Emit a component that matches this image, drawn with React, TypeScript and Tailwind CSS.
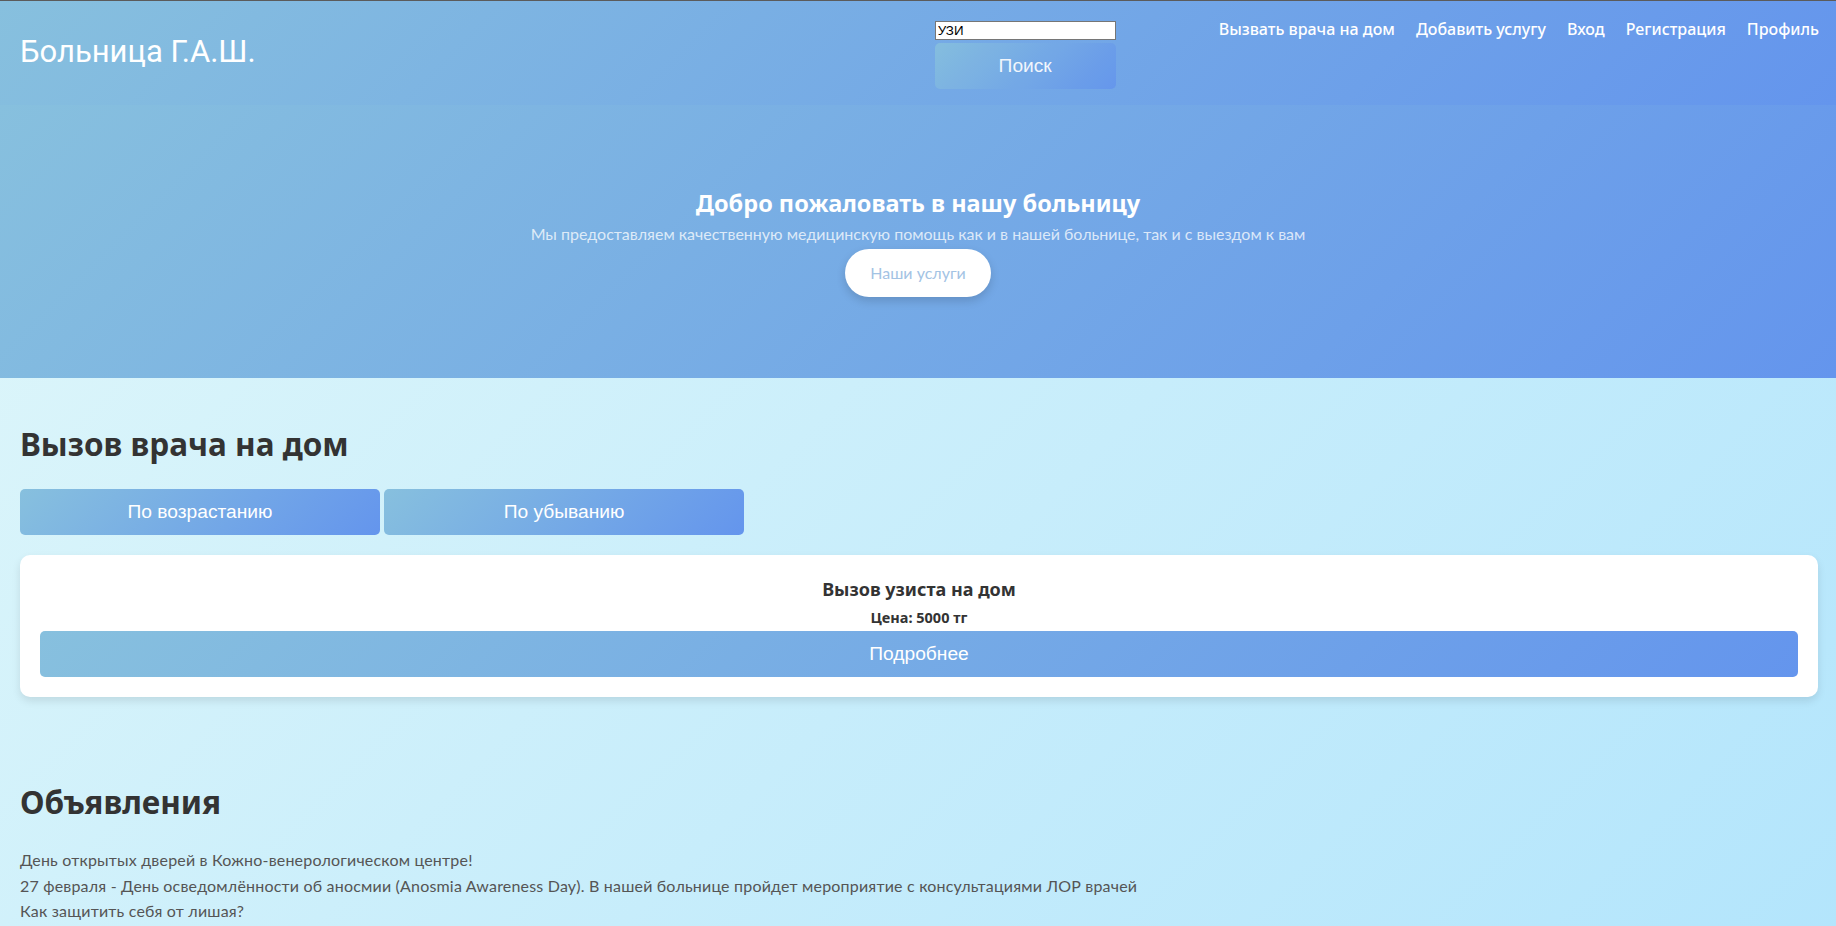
import React, { useState } from 'react';

const announcements = [
  'День открытых дверей в Кожно-венерологическом центре!',
  '27 февраля - День осведомлённости об аносмии (Anosmia Awareness Day). В нашей больнице пройдет мероприятие с консультациями ЛОР врачей',
  'Как защитить себя от лишая?',
];

const navLinks = ['Вызвать врача на дом', 'Добавить услугу', 'Вход', 'Регистрация', 'Профиль'];

const btnClass =
  "bg-[linear-gradient(135deg,#87c0de,#6495ed)] text-white rounded-[5px] py-3 leading-[22px] text-[19.2px] font-['Liberation_Sans',Arial,sans-serif]";

// headings use a slightly wider face than body text
const heading = "font-['Noto_Sans',sans-serif] font-bold";

const App: React.FC = () => {
  const [query, setQuery] = useState('УЗИ');

  return (
    <div className="min-h-screen border-t border-[#5b5b5b] bg-[linear-gradient(135deg,#e0f7fa,#b3e5fc)] font-['Lato','Noto_Sans',sans-serif] text-[#333]">
      {/* header */}
      <header className="flex items-start h-[104px] pl-[20px] pr-[17px] bg-[linear-gradient(135deg,#87c0de,#6495ed)]">
        <h1 className="flex-1 self-center text-[31px] leading-[38px] text-white font-['Roboto',sans-serif] -mt-[2px]">
          Больница Г.А.Ш.
        </h1>
        <form className="flex flex-col gap-[3px] mt-[20px]" onSubmit={(e) => e.preventDefault()}>
          <input
            value={query}
            onChange={(e) => setQuery(e.target.value)}
            className="w-[181px] h-[19px] border border-[#767676] bg-white px-[2px] text-[13.33px] text-black font-['Liberation_Sans',Arial,sans-serif] outline-none"
          />
          <button type="submit" className={`${btnClass} w-[181px] opacity-90`}>
            Поиск
          </button>
        </form>
        <nav className="flex gap-[21px] ml-[103px] mt-[16px]">
          {navLinks.map((l) => (
            <a key={l} href="#" className="text-white font-['Noto_Sans',sans-serif] font-medium text-[16px] leading-[24px]">
              {l}
            </a>
          ))}
        </nav>
      </header>

      {/* hero */}
      <section className="h-[273px] flex flex-col items-center justify-center bg-[linear-gradient(135deg,#87c0de,#6495ed)] text-center">
        <h2 className={`${heading} text-[23.5px] leading-[32px] text-white`}>Добро пожаловать в нашу больницу</h2>
        <p className="mt-[3px] text-[16px] leading-[24px] text-white/75">
          Мы предоставляем качественную медицинскую помощь как и в нашей больнице, так и с выездом к вам
        </p>
        <button className="mt-[3px] h-[48px] px-[25px] rounded-full bg-white text-[#a3c3e4] text-[16px] shadow-[0_4px_10px_rgba(0,0,0,0.15)]">
          Наши услуги
        </button>
      </section>

      {/* doctors */}
      <section className="pl-[20px] pr-[18px] pt-[20px]">
        <h2 className={`${heading} mt-[27px] mb-[26px] text-[31.5px] leading-[38px]`}>Вызов врача на дом</h2>
        <div className="flex gap-[4px]">
          <button className={`${btnClass} w-[360px]`}>По возрастанию</button>
          <button className={`${btnClass} w-[360px]`}>По убыванию</button>
        </div>
        <div className="mt-[20px] bg-white rounded-[10px] p-[20px] shadow-[0_4px_8px_rgba(0,0,0,0.1)] text-center">
          <h3 className={`${heading} text-[18px] leading-[28px]`}>Вызов узиста на дом</h3>
          <p className={`${heading} mt-[4px] text-[14.5px] leading-[20px]`}>Цена: 5000 тг</p>
          <button className={`${btnClass} w-full mt-[4px]`}>Подробнее</button>
        </div>
      </section>

      {/* announcements */}
      <section className="pl-[20px] pr-[18px] pb-[20px]">
        <h2 className={`${heading} mt-[86px] mb-[26px] text-[31.5px] leading-[38px]`}>Объявления</h2>
        <ul>
          {announcements.map((a) => (
            <li key={a} className="text-[16px] leading-[25.5px] text-[#555] tracking-[0.19px]">
              {a}
            </li>
          ))}
        </ul>
      </section>
    </div>
  );
};

export default App;
